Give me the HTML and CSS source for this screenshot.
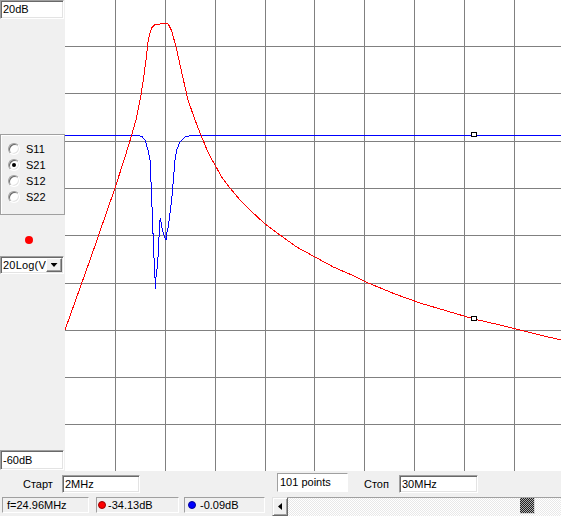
FILE: index.html
```html
<!DOCTYPE html>
<html>
<head>
<meta charset="utf-8">
<link rel="stylesheet" href="styles.css">
</head>
<body>
<div class="app">
  <aside class="side">
    <div class="edit">20dB</div>
    <div class="radios">
      <div class="opt"><span class="radio"></span>S11</div>
      <div class="opt"><span class="radio on"></span>S21</div>
      <div class="opt"><span class="radio"></span>S12</div>
      <div class="opt"><span class="radio"></span>S22</div>
    </div>
    <span class="led"></span>
    <div class="combo">
      <span class="combo-text">20Log(V)</span>
      <span class="combo-btn"><span class="arrow-down"></span></span>
    </div>
    <div class="edit low">-60dB</div>
  </aside>

  <svg class="plot" width="496" height="471" viewBox="65 0 496 471" xmlns="http://www.w3.org/2000/svg">
    <rect x="65" y="0" width="496" height="471" fill="#fff"/>
    <path class="grid" d="M115.5 0V471M165.5 0V471M215.5 0V471M265.5 0V471M314.5 0V471M364.5 0V471M414.5 0V471M464.5 0V471M514.5 0V471M65 46.5H561M65 93.5H561M65 141.5H561M65 188.5H561M65 235.5H561M65 283.5H561M65 330.5H561M65 377.5H561M65 424.5H561"/>
    <polyline class="trace blue" points="65,135.5 138,135.5 142,136.5 145,140 148,150 150,160 150.7,173 151.7,200 152.7,223 153.3,243 154.7,273 155.7,289 156,277 157.3,267 158.3,253 159,237 160,220 160.7,219 161.7,227 163.3,233 165,238 166,240 166.7,233 168.3,227 170,213 171.7,200 173.3,180 175,160 176.7,150 180,142 185,137 190,135.8 195,135.5 561,135.5"/>
    <polyline class="trace red" points="65,330 90,260 115,188 125,157 131.7,135 136,120 141,95 144,75 146,60 148.3,40 150,33 151.7,28 155.7,24 160,24 165,23 168.3,24 171.7,31 173.3,37 175,43 176.7,50 179,60 183,78 188,100 195,120 201.7,137 208.3,153 215,165 221.7,177 230,188 238.3,198 250,210 265,224 280,235 296.7,247 315,257 333.3,267 351.7,275 368.3,283 395,294 420,303 447,311 474,319 500,325 520,330 540,335 561,340"/>
    <rect class="mark" x="471.5" y="132.5" width="5" height="4"/>
    <rect class="mark" x="471.5" y="316.5" width="5" height="4"/>
  </svg>

  <footer class="bar">
    <div class="row1">
      <span class="lbl lbl-start">Старт</span>
      <div class="field f-start">2MHz</div>
      <div class="points">101 points</div>
      <span class="lbl lbl-stop">Стоп</span>
      <div class="field f-stop">30MHz</div>
    </div>
    <div class="row2">
      <div class="stat s-f">f=24.96MHz</div>
      <div class="stat s-red"><span class="dot dot-red"></span>-34.13dB</div>
      <div class="stat s-blue"><span class="dot dot-blue"></span>-0.09dB</div>
      <div class="sb">
        <span class="sb-btn"><span class="arrow-left"></span></span>
        <div class="sb-track"><span class="sb-thumb"></span></div>
      </div>
    </div>
  </footer>
</div>
</body>
</html>
```
FILE: styles.css
```css
* { box-sizing: border-box; }
html, body { margin: 0; padding: 0; }
body {
  width: 561px;
  height: 516px;
  overflow: hidden;
  background: #f0f0f0;
  font: 11px "Liberation Sans", Arial, sans-serif;
  color: #000;
}
.app {
  display: grid;
  grid-template-columns: 65px 496px;
  grid-template-rows: 471px 45px;
}
.side {
  display: flex;
  flex-direction: column;
  align-items: flex-start;
  background: #f0f0f0;
}
.edit, .field, .combo {
  background: #fff;
  border: 1px solid;
  border-color: #a0a0a0 #fff #fff #a0a0a0;
  box-shadow: inset 1px 1px #696969, inset -1px -1px #e3e3e3;
  white-space: nowrap;
  overflow: hidden;
}
.edit {
  width: 64px;
  height: 19px;
  padding-left: 2px;
  line-height: 17px;
}
.edit.low {
  margin-top: auto;
  margin-bottom: 1px;
  height: 20px;
  line-height: 18px;
}
.radios {
  margin-top: 115px;
  width: 65px;
  height: 81px;
  border: 1px solid #a0a0a0;
  box-shadow: inset 1px 1px #fff;
  padding-top: 6px;
}
.opt {
  display: flex;
  align-items: center;
  height: 16px;
  padding-left: 7px;
  gap: 6px;
}
.radio {
  position: relative;
  width: 12px;
  height: 12px;
  border-radius: 50%;
  background: #fff;
  border: 1px solid;
  border-color: #a0a0a0 #fff #fff #a0a0a0;
  box-shadow: inset 1px 1px #696969, inset -1px -1px #e3e3e3;
}
.radio.on::after {
  content: "";
  position: absolute;
  left: 3px;
  top: 3px;
  width: 4px;
  height: 4px;
  border-radius: 50%;
  background: #000;
}
.led {
  margin: 21px 0 0 25px;
  width: 8px;
  height: 8px;
  border-radius: 50%;
  background: #f00;
}
.combo {
  margin-top: 12px;
  width: 64px;
  height: 18px;
  padding: 1px;
  display: flex;
}
.combo-text {
  flex: 1;
  min-width: 0;
  overflow: hidden;
  padding-left: 1px;
  line-height: 14px;
  letter-spacing: 0.2px;
}
.combo-btn {
  flex: none;
  width: 16px;
  height: 14px;
  background: #f0f0f0;
  border: 1px solid;
  border-color: #fff #696969 #696969 #fff;
  box-shadow: inset -1px -1px #a0a0a0;
  display: flex;
  align-items: center;
  justify-content: center;
}
.arrow-down {
  width: 7px;
  height: 4px;
  background: #000;
  clip-path: polygon(0 0, 100% 0, 50% 100%);
}
.plot { display: block; }
.grid { stroke: #808080; stroke-width: 1; fill: none; shape-rendering: crispEdges; }
.trace { fill: none; stroke-width: 1; shape-rendering: crispEdges; }
.trace.red { stroke: #f00; }
.trace.blue { stroke: #00f; }
.mark { fill: #fff; stroke: #000; stroke-width: 1; shape-rendering: crispEdges; }

.bar {
  grid-column: 1 / -1;
  display: flex;
  flex-direction: column;
}
.row1 {
  height: 25px;
  display: flex;
  align-items: flex-start;
  padding-top: 4px;
}
.lbl { line-height: 18px; white-space: nowrap; }
.lbl-start { margin-left: 23px; width: 39px; }
.lbl-stop { margin-left: 16px; width: 35px; }
.field {
  height: 18px;
  padding-left: 2px;
  line-height: 16px;
}
.f-start { width: 78px; }
.f-stop { width: 79px; }
.points {
  margin-left: 137px;
  margin-top: -2px;
  width: 71px;
  height: 19px;
  background: #fff;
  border: 1px solid;
  border-color: #a0a0a0 #fff #fff #a0a0a0;
  padding-left: 2px;
  line-height: 17px;
  white-space: nowrap;
}
.row2 {
  height: 20px;
  display: flex;
  align-items: flex-start;
  padding-top: 1px;
}
.stat {
  height: 16px;
  border: 1px solid;
  border-color: #a0a0a0 #fff #fff #a0a0a0;
  display: flex;
  align-items: center;
  white-space: nowrap;
  overflow: hidden;
}
.s-f { margin-left: 2px; width: 87px; padding-left: 4px; }
.s-red { margin-left: 7px; width: 83px; padding-left: 1px; gap: 2px; }
.s-blue { margin-left: 5px; width: 81px; padding-left: 3px; gap: 4px; }
.dot {
  flex: none;
  width: 8px;
  height: 8px;
  border-radius: 50%;
}
.dot-red { background: #f00; border: 1px solid #900; }
.dot-blue { background: #00f; border: 1px solid #009; }
.sb {
  margin-left: 7px;
  flex: 1;
  height: 19px;
  display: flex;
}
.sb-btn {
  width: 16px;
  height: 19px;
  background: #f0f0f0;
  border: 1px solid;
  border-color: #e3e3e3 #696969 #696969 #e3e3e3;
  box-shadow: inset 1px 1px #fff, inset -1px -1px #a0a0a0;
  display: flex;
  align-items: center;
  justify-content: center;
}
.arrow-left {
  width: 4px;
  height: 7px;
  background: #000;
  clip-path: polygon(100% 0, 100% 100%, 0 50%);
}
.sb-track {
  flex: 1;
  height: 19px;
  border-top: 1px solid #a0a0a0;
  background: repeating-conic-gradient(#fff 0 25%, #e8e8e8 0 50%) 0 0 / 2px 2px;
  display: flex;
  align-items: flex-start;
}
.sb-thumb {
  margin-left: 232px;
  width: 15px;
  height: 16px;
  background: repeating-conic-gradient(#202020 0 25%, #b0b0b0 0 50%) 0 0 / 2px 2px;
  border-right: 1px solid #d8d8d8;
  border-bottom: 1px solid #d8d8d8;
}
```
